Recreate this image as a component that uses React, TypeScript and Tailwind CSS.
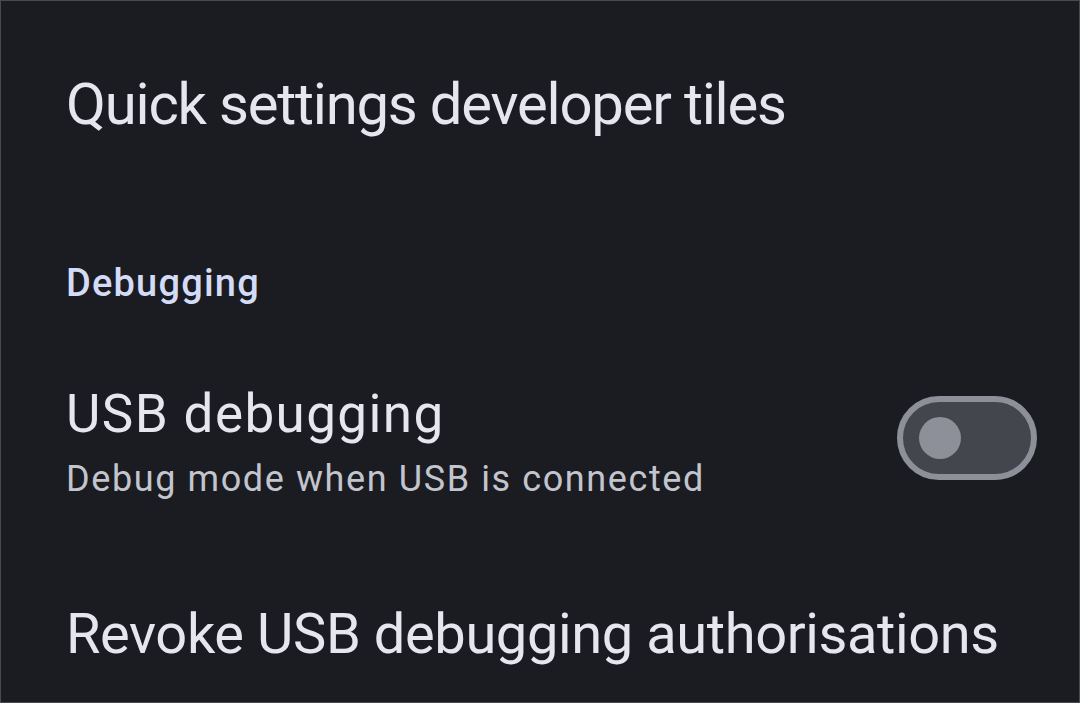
export default function App() {
  return (
    <div
      className="w-[1080px] h-[703px] bg-[#1b1c21] border border-[#4a4b50] overflow-hidden flex flex-col"
      style={{ fontFamily: "Roboto, 'Noto Sans', sans-serif" }}
    >
      <div className="pl-[65px] pt-[63px] text-[58px] leading-[80px] tracking-[-1.2px] text-[#e6e7ee]">
        Quick settings developer tiles
      </div>
      <div className="pl-[65px] mt-[114px] text-[38px] leading-[50px] tracking-[1.2px] font-medium text-[#d3dbf7]">
        Debugging
      </div>
      <div className="pl-[65px] pr-[42px] mt-[73px] flex items-start justify-between">
        <div className="flex flex-col">
          <div className="text-[53px] leading-[66px] tracking-[1.4px] text-[#e6e7ee]">USB debugging</div>
          <div className="mt-[10px] text-[36px] leading-[44px] tracking-[1.6px] text-[#c3c5ce]">Debug mode when USB is connected</div>
        </div>
        <div className="mt-[15px] w-[140px] h-[84px] rounded-full border-[6px] border-[#8e9099] bg-[#44464e] flex items-center pl-[16px]">
          <div className="w-[42px] h-[42px] rounded-full bg-[#8e9099]" />
        </div>
      </div>
      <div className="pl-[65px] mt-[98px] text-[56px] leading-[70px] tracking-[-0.4px] text-[#e6e7ee]">
        Revoke USB debugging authorisations
      </div>
    </div>
  );
}
